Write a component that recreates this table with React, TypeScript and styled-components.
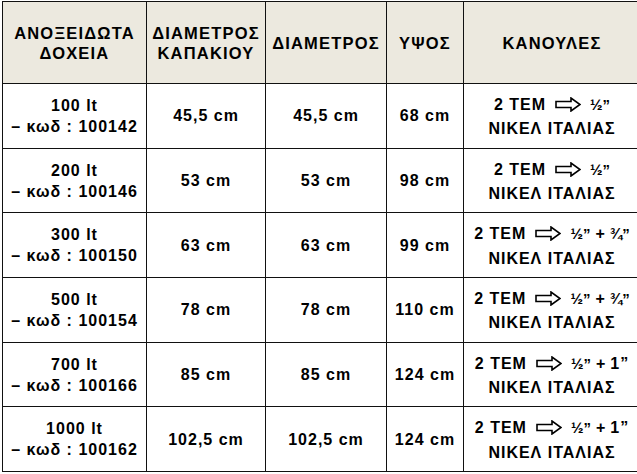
import styled, { createGlobalStyle } from 'styled-components';

const GlobalStyle = createGlobalStyle`
  body {
    margin: 0;
    background: #fff;
    font-family: 'Liberation Sans', Arial, sans-serif;
  }
`;

const Page = styled.div`
  padding: 1px 0 0 2px;
`;

const Table = styled.table`
  border-collapse: collapse;
  table-layout: fixed;
  width: 633px;
  color: #000;
  font-weight: bold;
`;

const HeadCell = styled.th<{ $w: number }>`
  width: ${(p) => p.$w}px;
  height: 81px;
  padding: 0;
  border: 1.5px solid #111;
  background: #ece9df;
  font-size: 16.5px;
  letter-spacing: 1.2px;
  line-height: 20px;
  text-align: center;
  vertical-align: middle;
`;

const Row = styled.tr`
  height: 64.7px;
`;

const Cell = styled.td`
  padding: 0;
  border: 1.5px solid #111;
  font-size: 16px;
  letter-spacing: 1px;
  line-height: 21px;
  text-align: center;
  vertical-align: middle;
`;

const Line = styled.div`
  white-space: nowrap;
`;

const PipeLine = styled.div`
  display: flex;
  align-items: center;
  justify-content: center;
  gap: 9px;
  height: 24px;
  margin-bottom: 2px;
  white-space: nowrap;
`;

const Small = styled.span`
  font-size: 15px;
  letter-spacing: 0;
`;

const Plus = styled.span`
  font-size: 16px;
  margin: 0 4px 0 5px;
`;

const Arrow = () => (
  <svg width="26" height="15" viewBox="0 0 26 15">
    <path
      d="M1 4.5 H16 V1 L25 7.5 L16 14 V10.5 H1 Z"
      fill="#fff"
      stroke="#000"
      strokeWidth="1.6"
      strokeLinejoin="miter"
    />
  </svg>
);

type Item = {
  lt: string;
  code: string;
  lid: string;
  dia: string;
  height: string;
  extra?: string;
};

const items: Item[] = [
  { lt: '100 lt', code: '100142', lid: '45,5 cm', dia: '45,5 cm', height: '68 cm' },
  { lt: '200 lt', code: '100146', lid: '53 cm', dia: '53 cm', height: '98 cm' },
  { lt: '300 lt', code: '100150', lid: '63 cm', dia: '63 cm', height: '99 cm', extra: '¾' },
  { lt: '500 lt', code: '100154', lid: '78 cm', dia: '78 cm', height: '110 cm', extra: '¾' },
  { lt: '700 lt', code: '100166', lid: '85 cm', dia: '85 cm', height: '124 cm', extra: '1' },
  { lt: '1000 lt', code: '100162', lid: '102,5 cm', dia: '102,5 cm', height: '124 cm', extra: '1' },
];

function Pipes({ extra }: { extra?: string }) {
  return (
    <>
      <PipeLine>
        <span>2 ΤΕΜ</span>
        <Arrow />
        <span>
          <Small>½”</Small>
          {extra && (
            <>
              <Plus>+</Plus>
              {extra === '1' ? <span>1”</span> : <Small>{extra}”</Small>}
            </>
          )}
        </span>
      </PipeLine>
      <Line>ΝΙΚΕΛ ΙΤΑΛΙΑΣ</Line>
    </>
  );
}

export default function App() {
  return (
    <Page>
      <GlobalStyle />
      <Table>
        <thead>
          <tr>
            <HeadCell $w={143}>
              ΑΝΟΞΕΙΔΩΤΑ
              <br />
              ΔΟΧΕΙΑ
            </HeadCell>
            <HeadCell $w={118}>
              ΔΙΑΜΕΤΡΟΣ
              <br />
              ΚΑΠΑΚΙΟΥ
            </HeadCell>
            <HeadCell $w={120}>ΔΙΑΜΕΤΡΟΣ</HeadCell>
            <HeadCell $w={76}>ΥΨΟΣ</HeadCell>
            <HeadCell $w={176}>ΚΑΝΟΥΛΕΣ</HeadCell>
          </tr>
        </thead>
        <tbody>
          {items.map((it) => (
            <Row key={it.code}>
              <Cell>
                <Line>{it.lt}</Line>
                <Line>– κωδ : {it.code}</Line>
              </Cell>
              <Cell>{it.lid}</Cell>
              <Cell>{it.dia}</Cell>
              <Cell>{it.height}</Cell>
              <Cell>
                <Pipes extra={it.extra} />
              </Cell>
            </Row>
          ))}
        </tbody>
      </Table>
    </Page>
  );
}
